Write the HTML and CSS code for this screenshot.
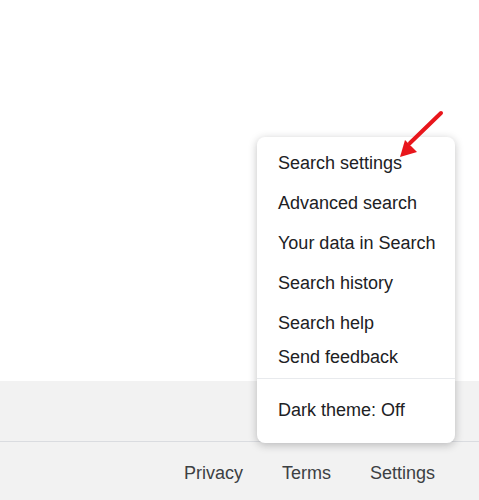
FILE: index.html
```html
<!DOCTYPE html>
<html lang="en">
<head>
    <meta charset="UTF-8">
    <title>Settings menu</title>
    <link rel="stylesheet" href="styles.css">
</head>
<body>
    <div class="page"></div>

    <div class="footer">
        <div class="footer-top"></div>
        <div class="footer-links">
            <a href="#">Privacy</a>
            <a href="#">Terms</a>
            <a href="#">Settings</a>
        </div>
    </div>

    <div class="menu">
        <a class="item" href="#">Search settings</a>
        <a class="item" href="#">Advanced search</a>
        <a class="item" href="#">Your data in Search</a>
        <a class="item" href="#">Search history</a>
        <a class="item" href="#">Search help</a>
        <a class="item short" href="#">Send feedback</a>
        <div class="divider"></div>
        <a class="item" href="#">Dark theme: Off</a>
    </div>

    <!-- red annotation arrow -->
    <svg class="arrow" width="60" height="60" viewBox="0 0 60 60">
        <line x1="51" y1="3" x2="20" y2="33" stroke="#e8161c" stroke-width="4" stroke-linecap="round"/>
        <polygon points="10,47 15,30 27,42" fill="#e8161c"/>
    </svg>
</body>
</html>
```

FILE: styles.css
```css
body {
    margin: 0;
    font-family: Arial, "Liberation Sans", sans-serif;
    font-size: 18px;
    color: #202124;
    background-color: #fff;
    overflow: hidden;
}

a {
    color: inherit;
    text-decoration: none;
}

.page {
    height: 381px;
}

.footer {
    background-color: #f2f2f2;
}

.footer-top {
    height: 60px;
    border-bottom: 1px solid #dadce0;
}

.footer-links {
    display: flex;
    justify-content: flex-end;
    gap: 39px;
    height: 58px;
    align-items: center;
    padding-right: 44px;
    padding-top: 2px;
    color: #3c4043;
}

.menu {
    position: absolute;
    top: 137px;
    left: 257px;
    width: 198px;
    padding: 6px 0 11px;
    background-color: #fff;
    border-radius: 8px;
    box-shadow: 0 2px 8px rgba(32, 33, 36, 0.28);
    box-sizing: border-box;
    height: 306px;
}

.item {
    display: flex;
    align-items: center;
    height: 40px;
    padding-left: 21px;
}

.item.short {
    height: 28px;
    margin-bottom: 7px;
}

.divider {
    height: 1px;
    background-color: #e8eaed;
    margin-bottom: 11px;
}

.arrow {
    position: absolute;
    top: 110px;
    left: 390px;
}
```
